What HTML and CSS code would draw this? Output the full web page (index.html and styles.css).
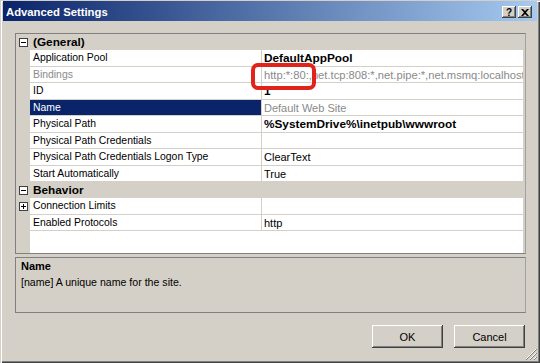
FILE: index.html
```html
<!DOCTYPE html>
<html lang="en">
<head>
<meta charset="UTF-8">
<title>Advanced Settings</title>
<link rel="stylesheet" href="styles.css">
</head>
<body>
<div class="window">
    <div class="titlebar">
        <span class="title">Advanced Settings</span>
        <div class="caption-buttons">
            <span class="cap-btn help">?</span>
            <span class="cap-btn">
                <svg width="8" height="7" viewBox="0 0 8 7"><path d="M0 0h2l2 2 2-2h2L5 3.5 8 7H6L4 5 2 7H0l3-3.5z" fill="#000"/></svg>
            </span>
        </div>
    </div>

    <div class="content">
        <div class="grid">
            <div class="row category">
                <span class="gutter"><i class="toggle minus"></i></span>
                <span class="name">(General)</span>
            </div>
            <div class="row">
                <span class="gutter"></span>
                <span class="name">Application Pool</span>
                <span class="value bold">DefaultAppPool</span>
            </div>
            <div class="row readonly">
                <span class="gutter"></span>
                <span class="name">Bindings</span>
                <span class="value">http:*:80:,net.tcp:808:*,net.pipe:*,net.msmq:localhost</span>
            </div>
            <div class="row">
                <span class="gutter"></span>
                <span class="name">ID</span>
                <span class="value bold">1</span>
            </div>
            <div class="row selected">
                <span class="gutter"></span>
                <span class="name">Name</span>
                <span class="value dim">Default Web Site</span>
            </div>
            <div class="row">
                <span class="gutter"></span>
                <span class="name">Physical Path</span>
                <span class="value bold">%SystemDrive%\inetpub\wwwroot</span>
            </div>
            <div class="row">
                <span class="gutter"></span>
                <span class="name">Physical Path Credentials</span>
                <span class="value"></span>
            </div>
            <div class="row">
                <span class="gutter"></span>
                <span class="name">Physical Path Credentials Logon Type</span>
                <span class="value">ClearText</span>
            </div>
            <div class="row">
                <span class="gutter"></span>
                <span class="name">Start Automatically</span>
                <span class="value">True</span>
            </div>
            <div class="row category">
                <span class="gutter"><i class="toggle minus"></i></span>
                <span class="name">Behavior</span>
            </div>
            <div class="row">
                <span class="gutter"><i class="toggle plus"></i></span>
                <span class="name">Connection Limits</span>
                <span class="value"></span>
            </div>
            <div class="row">
                <span class="gutter"></span>
                <span class="name">Enabled Protocols</span>
                <span class="value">http</span>
            </div>
            <div class="filler"></div>
        </div>

        <div class="desc">
            <div class="desc-title">Name</div>
            <div>[name] A unique name for the site.</div>
        </div>

        <div class="actions">
            <button class="btn">OK</button>
            <button class="btn">Cancel</button>
        </div>
    </div>

    <!-- annotation drawn over the bindings value -->
    <div class="mark"></div>

    <svg class="grip" width="12" height="12" viewBox="0 0 12 12">
        <path d="M11 1L1 11M11 5L5 11M11 9L9 11" stroke="#fff" stroke-width="1"/>
        <path d="M12 1L1 12M12 5L5 12M12 9L9 12" stroke="#808080" stroke-width="1"/>
    </svg>
</div>
</body>
</html>
```

FILE: styles.css
```css
* {
    box-sizing: border-box;
}
body {
    margin: 0;
    font-family: "Liberation Sans", Arial, sans-serif;
    font-size: 11px;
    color: #000;
}
.window {
    position: relative;
    width: 540px;
    height: 363px;
    padding: 1px 3px 2px 3px;
    display: flex;
    flex-direction: column;
    background: #d4d0c8;
    box-shadow: inset 1px 1px #d4d0c8, inset 2px 2px #fff, inset -1px -1px #404040, inset -2px -2px #808080;
}
.titlebar {
    flex: none;
    height: 20px;
    display: flex;
    align-items: center;
    justify-content: space-between;
    padding: 2px 5px 0 3px;
    background: linear-gradient(to right, #0a246a, #a6caf0);
    color: #fff;
}
.title {
    font-weight: bold;
    font-size: 11.3px;
}
.caption-buttons {
    display: flex;
    gap: 2px;
}
.cap-btn {
    width: 14px;
    height: 12px;
    display: flex;
    align-items: center;
    justify-content: center;
    background: #d4d0c8;
    color: #000;
    font-weight: bold;
    font-size: 10px;
    box-shadow: inset -1px -1px #404040, inset 1px 1px #fff, inset -2px -2px #808080;
}

.content {
    flex: 1;
    display: flex;
    flex-direction: column;
    padding: 12px 11px 0 12px;
}
.grid {
    height: 221px;
    display: flex;
    flex-direction: column;
    border: 1px solid #808080;
    border-right-color: #a0a0a0;
    padding-right: 2px;
    background: #d4d0c8;
    overflow: hidden;
}
.row {
    flex: none;
    height: 16.45px;
    display: grid;
    grid-template-columns: 14px 231px 1fr;
    line-height: 16px;
}
.gutter {
    display: flex;
    align-items: center;
    justify-content: center;
}
.name, .value {
    background: #fff;
    border-bottom: 1px solid #d4d0c8;
    white-space: nowrap;
    overflow: hidden;
}
.name {
    padding-left: 3px;
    font-size: 10.4px;
}
.value {
    padding-left: 2px;
    border-left: 1px solid #d4d0c8;
}
.bold {
    font-weight: bold;
    font-size: 11.8px;
}
.dim, .readonly .name, .readonly .value {
    color: #8a8a8a;
}
.readonly .value {
    font-size: 11.2px;
}
.category .name {
    grid-column: span 2;
    background: #d4d0c8;
    font-weight: bold;
    font-size: 11.8px;
}
.selected .name {
    background: #0a246a;
    color: #fff;
}
.toggle {
    position: relative;
    width: 9px;
    height: 9px;
    border: 1px solid #404040;
    background: #fff;
    margin-left: 1px;
}
.toggle::before, .toggle::after {
    content: "";
    position: absolute;
    background: #000;
}
.toggle::before {
    left: 1px;
    top: 3px;
    width: 5px;
    height: 1px;
}
.plus::after {
    left: 3px;
    top: 1px;
    width: 1px;
    height: 5px;
}
.filler {
    flex: 1;
    margin-left: 14px;
    background: #fff;
}

.desc {
    height: 56px;
    margin-top: 3px;
    padding: 0 5px;
    border: 1px solid #808080;
    border-right-color: #a0a0a0;
    font-size: 10.6px;
    line-height: 16px;
}
.desc-title {
    font-weight: bold;
    font-size: 11px;
}

.actions {
    display: flex;
    justify-content: flex-end;
    gap: 11px;
    margin-top: 12px;
    padding-right: 1px;
}
.btn {
    width: 71px;
    height: 23px;
    border: none;
    background: #d4d0c8;
    font-family: inherit;
    font-size: 11px;
    color: #000;
    box-shadow: inset -1px -1px #404040, inset 1px 1px #fff, inset -2px -2px #808080, inset 2px 2px #d4d0c8;
}

.mark {
    position: absolute;
    left: 251px;
    top: 63px;
    width: 65px;
    height: 27px;
    border: 4px solid #e2231a;
    border-radius: 7px;
}
.grip {
    position: absolute;
    right: 3px;
    bottom: 3px;
}
```
